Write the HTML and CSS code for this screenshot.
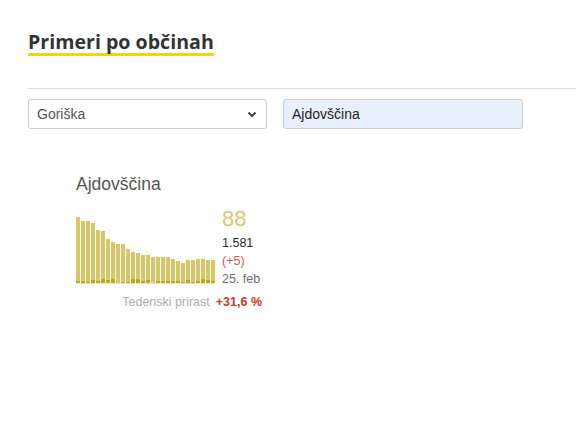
FILE: index.html
```html
<!DOCTYPE html>
<html lang="sl">
<head>
<meta charset="utf-8">
<link rel="stylesheet" href="styles.css">
</head>
<body>
<div class="page">
  <h2 class="title"><span>Primeri po občinah</span></h2>
  <div class="rule"></div>
  <div class="controls">
    <div class="select">
      <span>Goriška</span>
      <svg class="chev" width="10" height="7" viewBox="0 0 10 7"><path d="M1.5 1.5 L5 5 L8.5 1.5" fill="none" stroke="#444" stroke-width="2"/></svg>
    </div>
    <div class="input">Ajdovščina</div>
  </div>
  <div class="card">
    <div class="card-title">Ajdovščina</div>
    <div class="card-body">
      <div class="chart">
        <div class="bar" style="height:66px"><i style="height:2px"></i></div>
        <div class="bar" style="height:62px"><i style="height:2px"></i></div>
        <div class="bar" style="height:62px"><i style="height:1px"></i></div>
        <div class="bar" style="height:60px"><i style="height:3px"></i></div>
        <div class="bar" style="height:53px"><i style="height:2px"></i></div>
        <div class="bar" style="height:52px"><i style="height:4px"></i></div>
        <div class="bar" style="height:44px"><i style="height:3px"></i></div>
        <div class="bar" style="height:41px"><i style="height:4px"></i></div>
        <div class="bar" style="height:39px"><i style="height:0px"></i></div>
        <div class="bar" style="height:39px"><i style="height:1px"></i></div>
        <div class="bar" style="height:34px"><i style="height:1px"></i></div>
        <div class="bar" style="height:31px"><i style="height:4px"></i></div>
        <div class="bar" style="height:30px"><i style="height:4px"></i></div>
        <div class="bar" style="height:28px"><i style="height:2px"></i></div>
        <div class="bar" style="height:28px"><i style="height:3px"></i></div>
        <div class="bar" style="height:26px"><i style="height:0px"></i></div>
        <div class="bar" style="height:26px"><i style="height:2px"></i></div>
        <div class="bar" style="height:26px"><i style="height:2px"></i></div>
        <div class="bar" style="height:26px"><i style="height:2px"></i></div>
        <div class="bar" style="height:24px"><i style="height:2px"></i></div>
        <div class="bar" style="height:22px"><i style="height:2px"></i></div>
        <div class="bar" style="height:20px"><i style="height:1px"></i></div>
        <div class="bar" style="height:23px"><i style="height:3px"></i></div>
        <div class="bar" style="height:23px"><i style="height:1px"></i></div>
        <div class="bar" style="height:24px"><i style="height:2px"></i></div>
        <div class="bar" style="height:24px"><i style="height:4px"></i></div>
        <div class="bar" style="height:23px"><i style="height:3px"></i></div>
        <div class="bar" style="height:23px"><i style="height:2px"></i></div>
      </div>
      <div class="stats">
        <div class="big">88</div>
        <div class="total">1.581</div>
        <div class="delta">(+5)</div>
        <div class="date">25. feb</div>
      </div>
    </div>
    <div class="growth"><span class="lbl">Tedenski prirast</span><span class="val">+31,6 %</span></div>
  </div>
</div>
</body>
</html>
```
FILE: styles.css
```css
html, body {
  margin: 0;
  padding: 0;
  background: #fff;
}
.page {
  padding: 29px 0 0 28px;
  font-family: "Liberation Sans", Arial, sans-serif;
}
.title {
  margin: 0;
  font-family: "Open Sans", "Liberation Sans", sans-serif;
  font-weight: 700;
  font-size: 19.6px;
  line-height: 26px;
  color: #333;
}
.title span {
  display: inline-block;
  border-bottom: 3px solid #f5d21a;
  line-height: 23px;
}
.rule {
  margin-top: 32px;
  height: 1px;
  background: #dcdcdf;
}
.controls {
  display: flex;
  gap: 16px;
  margin-top: 10px;
}
.select, .input {
  box-sizing: border-box;
  height: 30px;
  border: 1px solid #ccc;
  border-radius: 3px;
  font-size: 14px;
  display: flex;
  align-items: center;
  padding: 0 8px;
}
.select {
  width: 239px;
  color: #555;
  justify-content: space-between;
  background: #fff;
}
.chev {
  margin-right: 1px;
}
.input {
  width: 240px;
  background: #e8f0fe;
  color: #222;
}
.card {
  margin: 44px 0 0 48px;
  width: 186px;
}
.card-title {
  font-size: 17.5px;
  color: #555;
  line-height: 22px;
}
.card-body {
  display: flex;
  margin-top: 15px;
  gap: 7px;
}
.chart {
  display: flex;
  align-items: flex-end;
  gap: 1px;
  height: 66px;
  border-bottom: 1px solid #e4e4e4;
  margin-top: 7px;
  align-self: flex-start;
}
.bar {
  width: 4px;
  background: #d8c76a;
  display: flex;
  align-items: flex-end;
}
.bar i {
  display: block;
  width: 4px;
  background: #c2a904;
}
.stats {
  display: flex;
  flex-direction: column;
  font-size: 12.5px;
  line-height: 18px;
}
.big {
  font-size: 22px;
  line-height: 22px;
  color: #d9c96f;
  margin-top: -2px;
  margin-bottom: 4px;
}
.total { color: #1f2a33; }
.delta { color: #d9594c; }
.date { color: #6b6f75; }
.growth {
  display: flex;
  justify-content: flex-end;
  gap: 6px;
  font-size: 12.5px;
  margin-top: 7px;
}
.growth .lbl { color: #a9adb3; }
.growth .val { color: #c7392b; font-weight: 700; }
```
